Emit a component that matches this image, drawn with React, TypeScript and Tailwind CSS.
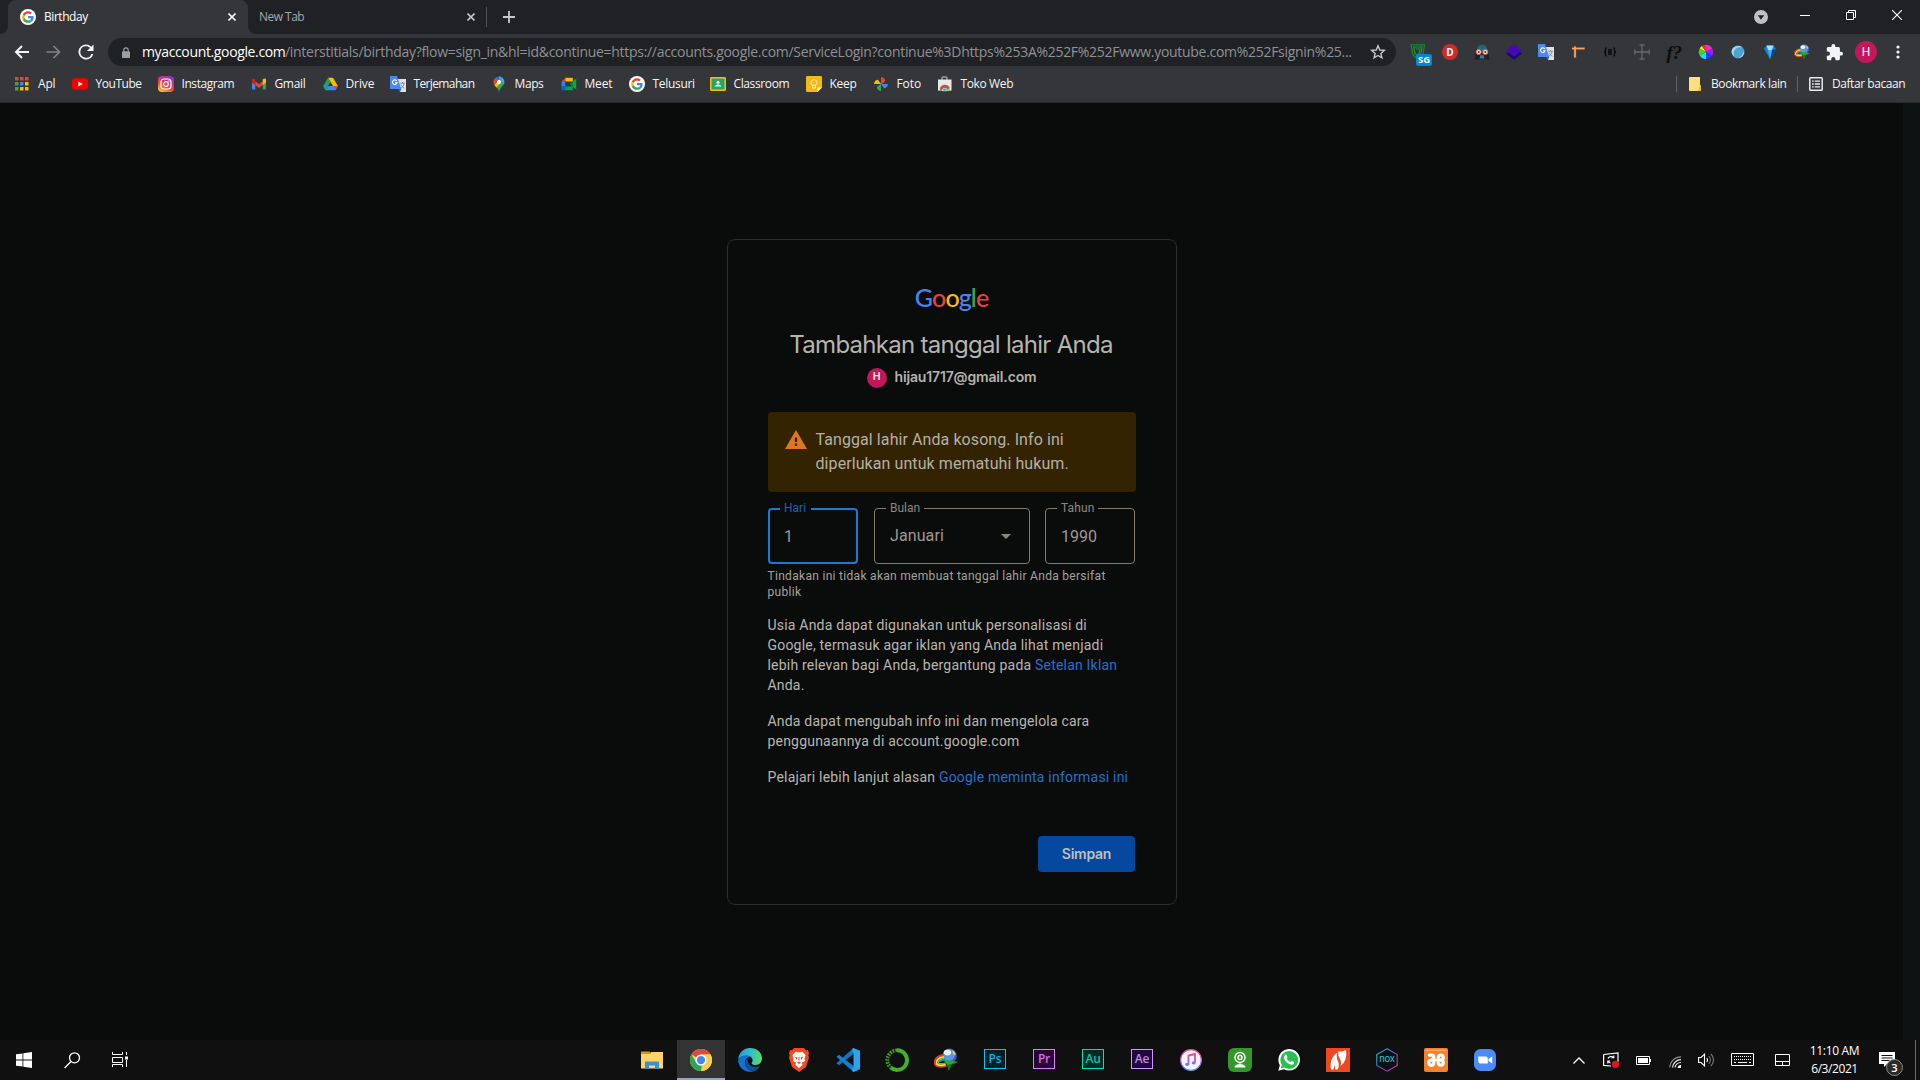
import React from "react";

type IconProps = { w: number; h?: number; vb?: string; className?: string; children: React.ReactNode };

function Svg({ w, h = w, vb, className = "", children }: IconProps) {
  return (
    <svg width={w} height={h} viewBox={vb ?? `0 0 ${w} ${h}`} fill="none" className={`block shrink-0 ${className}`}>
      {children}
    </svg>
  );
}

/* ---------- shared brand icons ---------- */

function GoogleG() {
  return (
    <Svg w={16} vb="0 0 32 32">
      <circle cx="16" cy="16" r="16" fill="#fff" />
      <g transform="translate(4.300 4.300) scale(.488)">
        <path fill="#EA4335" d="M24 9.5c3.54 0 6.71 1.22 9.21 3.6l6.85-6.85C35.9 2.38 30.47 0 24 0 14.62 0 6.51 5.38 2.56 13.22l7.98 6.19C12.43 13.72 17.74 9.5 24 9.5z" />
        <path fill="#4285F4" d="M46.98 24.55c0-1.57-.15-3.09-.38-4.55H24v9.02h12.94c-.58 2.96-2.26 5.48-4.78 7.18l7.73 6c4.51-4.18 7.09-10.36 7.09-17.65z" />
        <path fill="#FBBC05" d="M10.53 28.59c-.48-1.45-.76-2.99-.76-4.59s.27-3.14.76-4.59l-7.98-6.19C.92 16.46 0 20.12 0 24c0 3.88.92 7.54 2.56 10.78l7.97-6.19z" />
        <path fill="#34A853" d="M24 48c6.48 0 11.93-2.13 15.89-5.81l-7.73-6c-2.15 1.45-4.92 2.3-8.16 2.3-6.26 0-11.57-4.22-13.47-9.91l-7.98 6.19C6.51 42.62 14.62 48 24 48z" />
      </g>
    </Svg>
  );
}

function TranslateIcon() {
  return (
    <Svg w={16}>
      <path d="M7 3h9v12.6a.4.4 0 0 1-.4.4H10z" fill="#dfe3e8" />
      <path d="M10.2 7.2h4.6M12.5 6v1.2M11 12.2c1.6-1 2.7-2.600 3-5M11 8.600c.6 1.600 1.800 2.800 3.500 3.600" stroke="#7d858e" strokeWidth=".9" />
      <path d="M.6 0H7l4.300 13H.6a.6.6 0 0 1-.6-.6V.6A.6.6 0 0 1 .6 0z" fill="#4a8af4" />
      <path d="M8 13h3.300L10 16z" fill="#2f5fc4" />
      <path d="M6.800 4.900A2.300 2.300 0 1 0 7.100 6.700H5.100" stroke="#fff" strokeWidth="1.100" />
    </Svg>
  );
}

function IdmIcon({ size }: { size: number }) {
  return (
    <Svg w={size} vb="0 0 24 24">
      <circle cx="15.500" cy="7.800" r="7.300" fill="#2f63b8" />
      <circle cx="14.800" cy="7" r="6" fill="#5f94de" />
      <ellipse cx="13.500" cy="4.600" rx="3.600" ry="2.800" fill="#e9f3ff" />
      <path d="M18.500 2.300c1.700.8 2.800 2.300 3.200 4.200-.9 1.200-2 .8-2.400-.4s-1.300-2.600-.8-3.800z" fill="#e2cc62" />
      <path d="M9.500 7.200C3 7.500-.5 12.500.9 16.200c1.500 3 6.100 3.200 11.600 2" stroke="#e5392a" strokeWidth="1.800" />
      <path d="M9.700 8.900C4.600 9.300 1.600 13 2.600 15.500c1.100 2 5 2 9.200 1.100" stroke="#ffe03a" strokeWidth="2" />
      <path d="M10 10.700c-4 .4-6.200 2.900-5.500 4.300.8 1.100 3.800 1 6.700.2" stroke="#4fc858" strokeWidth="1.700" />
      <path d="M10 12.200c-2.500.3-4 1.400-3.600 2.100" stroke="#4a6fe0" strokeWidth="1.200" />
      <path d="M9.300 11.800L24 13.700l-6.500 2.700-2.700 6.300-1.500-5.400z" fill="#1db521" />
      <path d="M13.300 17.100L24 13.700l-6.500 2.700-2.700 6.300z" fill="#0c7a12" />
    </Svg>
  );
}

/* ---------- tab strip ---------- */

function CloseX({ color }: { color: string }) {
  return (
    <Svg w={8}>
      <path d="M.5.5l7 7M7.500.5l-7 7" stroke={color} strokeWidth="1.600" />
    </Svg>
  );
}

function TabStrip() {
  return (
    <div className="flex h-[34px] shrink-0 bg-[#202124]">
      <div className="flex w-2 items-end bg-[#35363a]">
        <div className="h-full w-full rounded-br-lg bg-[#202124]" />
      </div>
      <div className="flex h-full w-[240px] items-center rounded-t-lg bg-[#35363a] pr-3 pl-3">
        <GoogleG />
        <span className="ml-2 flex-1 text-[12px] tracking-[-0.45px] text-white">Birthday</span>
        <CloseX color="#f1f3f4" />
      </div>
      <div className="flex w-2 items-end bg-[#35363a]">
        <div className="h-full w-full rounded-bl-lg bg-[#202124]" />
      </div>
      <div className="flex w-[231px] items-center pl-[3px]">
        <span className="flex-1 text-[12px] tracking-[-0.52px] text-[#a5a8ad]">New Tab</span>
        <div className="mr-[11px]">
          <CloseX color="#c0c3c7" />
        </div>
        <div className="h-5 w-px bg-[#505256]" />
      </div>
      <div className="ml-4 flex items-center">
        <Svg w={12}>
          <path d="M6 0v12M0 6h12" stroke="#c6c9cd" strokeWidth="1.800" />
        </Svg>
      </div>
      <div className="flex-1" />
      <div className="flex items-center pr-[32px]">
        <Svg w={14}>
          <circle cx="7" cy="7" r="7" fill="#bdc0c5" />
          <path d="M3.800 5.200h6.400L7 9.800z" fill="#202124" />
        </Svg>
      </div>
      <div className="flex h-[29px] items-center gap-9 pr-[18px]">
        <Svg w={10}>
          <path d="M0 5.500h10" stroke="#fff" />
        </Svg>
        <Svg w={10}>
          <path d="M.5 2.500h7v7h-7zM2.500 2.500v-2h7v7h-2" stroke="#fff" />
        </Svg>
        <Svg w={10}>
          <path d="M0 0l10 10M10 0L0 10" stroke="#fff" strokeWidth="1.100" />
        </Svg>
      </div>
    </div>
  );
}

/* ---------- toolbar ---------- */

function Extensions() {
  return (
    <div className="flex h-[28px] items-center">
      {[
        <div key="sg" className="relative">
          <Svg w={16}>
            <path d="M1 .8h13.500L13 10.500 8 15.500 3 11z" stroke="#128a2d" strokeWidth="1.300" />
            <path d="M3.500 3h8.500l-1 6.500L8 12.500 5 9.500z" stroke="#109a2b" strokeWidth="1.200" />
            <path d="M6 5h4l-.6 4L8 10.500" stroke="#109a2b" strokeWidth="1.200" />
          </Svg>
          <div className="absolute top-[10px] left-[6px] flex h-3 w-4 items-center justify-center rounded-[2px] bg-[#0288d1] text-[9.500px] font-bold text-white">
            SG
          </div>
        </div>,
        <div key="d" className="flex size-4 items-center justify-center rounded-full bg-[#cf2a2a] text-[10px] font-bold text-white">
          D
        </div>,
        <Svg key="inc" w={16}>
          <path d="M3 7C3 2.500 5 .8 8.300.8S13.500 3 13.500 7z" fill="#2c6473" />
          <path d="M2 7h12l1.500 8.500H.5z" fill="#15252f" />
          <circle cx="4.700" cy="8" r="2.600" fill="#f6d5cb" stroke="#d9563b" strokeWidth=".7" />
          <circle cx="11.300" cy="8" r="2.600" fill="#f6d5cb" stroke="#d9563b" strokeWidth=".7" />
          <circle cx="4.700" cy="8" r="1" fill="#6b2b22" />
          <circle cx="11.300" cy="8" r="1" fill="#6b2b22" />
          <path d="M6.500 11h3l1 3.500h-5z" fill="#4f7583" />
        </Svg>,
        <Svg key="layers" w={16}>
          <path d="M0 9.500L8 4l8 5.500-8 6.500z" fill="#1f0872" />
          <path d="M0 6.500L8 .5l8 6-8 6z" fill="#4709b4" />
        </Svg>,
        <TranslateIcon key="tr" />,
        <Svg key="ruler" w={14}>
          <path d="M1 3.500h13M4 1v12" stroke="#7b4a22" strokeWidth="2.800" />
          <path d="M1 3.500h12.500M4 1.500v11" stroke="#f2a763" strokeWidth="1.700" />
        </Svg>,
        <Svg key="json" w={14} h={10}>
          <path d="M3.500 1C2 1 2.500 2 2.500 3.500S2 5 1 5c1 0 1.500 0 1.500 1.500S2 9 3.500 9M10.500 1c1.500 0 1 1 1 2.500S12 5 13 5c-1 0-1.500 0-1.500 1.500s.5 2.500-1 2.500M5 3h4M5 5h4M5 7h4" stroke="#08090a" strokeWidth="1.300" />
        </Svg>,
        <Svg key="cross" w={16}>
          <path d="M8 1v14M1 8h14M5.500.8h5M5.500 15.200h5M.8 5.500v5M15.200 5.500v5" stroke="#66686c" strokeWidth="1.300" />
        </Svg>,
        <span key="f" className="font-['Liberation_Serif'] text-[19px] leading-none font-bold tracking-[-0.5px] text-[#0c0c0d] italic">
          f?
        </span>,
        <Svg key="wheel" w={16}>
          <path d="M8 8L8 .8A7.200 7.200 0 0 1 14.200 4.400z" fill="#ff28c8" />
          <path d="M8 8l6.200-3.600a7.200 7.200 0 0 1 0 7.200z" fill="#a01cff" />
          <path d="M8 8l6.200 3.600A7.200 7.200 0 0 1 8 15.200z" fill="#1f3cff" />
          <path d="M8 8v7.200a7.200 7.200 0 0 1-6.200-3.600z" fill="#1fe0e8" />
          <path d="M8 8l-6.200 3.600a7.200 7.200 0 0 1 0-7.200z" fill="#27e22d" />
          <path d="M8 8L1.800 4.400A4 4 0 0 1 4 2z" fill="#e8f020" />
          <path d="M8 8L4 2A7.200 7.200 0 0 1 8 .8z" fill="#ff2a20" />
        </Svg>,
        <Svg key="sphere" w={14}>
          <circle cx="7" cy="7" r="6.500" fill="#4ea3d3" />
          <path d="M1 4.500C3 .5 9 0 11.500 2.300 9 2 6 2 4 4.500s-1 4-1 6.500C1 10 0 7 1 4.500z" fill="#a9d6ee" />
          <path d="M8 12.800c3-.5 5.300-3 5-6.500-.6 2.500-2.500 5-5 6.500z" fill="#d5e8f3" />
        </Svg>,
        <Svg key="gem" w={12} h={14}>
          <path d="M2.500.5h7L12 4 6 14 0 4z" fill="#1480d8" />
          <path d="M2.500.5h7L8 5H4z" fill="#9fe0ff" />
          <path d="M8 5l4-1-6 10z" fill="#0a3f93" />
          <path d="M4 5h4l-2 9z" fill="#38b6f4" />
        </Svg>,
        <IdmIcon key="idm" size={16} />,
        <Svg key="puzzle" w={17} vb="1 1 22 22">
          <path d="M20.500 11H19V7c0-1.100-.9-2-2-2h-4V3.500a2.500 2.500 0 0 0-5 0V5H4c-1.100 0-2 .9-2 2v3.800h1.500a2.700 2.700 0 0 1 0 5.400H2V20c0 1.100.9 2 2 2h3.800v-1.500a2.700 2.700 0 0 1 5.400 0V22H17c1.100 0 2-.9 2-2v-4h1.500a2.500 2.500 0 0 0 0-5z" fill="#f1f3f4" />
        </Svg>,
        <div key="av" className="flex size-[22px] items-center justify-center rounded-full bg-[#c2185b] font-['Roboto'] text-[12px] text-white">
          H
        </div>,
        <Svg key="dots" w={4} h={14}>
          <circle cx="2" cy="2" r="1.600" fill="#f1f3f4" />
          <circle cx="2" cy="7" r="1.600" fill="#f1f3f4" />
          <circle cx="2" cy="12" r="1.600" fill="#f1f3f4" />
        </Svg>,
      ].map((icon, i) => (
        <div key={i} className="flex w-8 shrink-0 items-center justify-center">
          {icon}
        </div>
      ))}
    </div>
  );
}

function Toolbar() {
  return (
    <div className="flex h-[36px] shrink-0 items-center bg-[#35363a]">
      <div className="flex w-[108px] shrink-0 items-center pl-[14px]">
        <Svg w={15} h={14}>
          <path d="M15 7H1.800M8 1L2 7l6 6" stroke="#f1f3f4" strokeWidth="2" />
        </Svg>
        <Svg w={15} h={14} className="ml-[17px]">
          <path d="M.5 7h13M7.500 1l6 6-6 6" stroke="#828387" strokeWidth="1.700" />
        </Svg>
        <Svg w={16} className="ml-[17px]" vb="3.500 3.500 17 17">
          <path d="M17.650 6.350A7.960 7.960 0 0 0 12 4a8 8 0 1 0 7.730 10h-2.080A6 6 0 1 1 12 6c1.660 0 3.140.69 4.220 1.780L13 11h7V4z" fill="#f1f3f4" />
        </Svg>
      </div>
      <div className="flex h-7 w-[1288px] shrink-0 items-center rounded-full bg-[#202124] pr-[10px] pl-[14px]">
        <Svg w={8} h={11}>
          <path d="M1.800 4.500V3a2.200 2.200 0 0 1 4.400 0v1.500" stroke="#9aa0a6" strokeWidth="1.200" />
          <rect y="4.200" width="8" height="6.800" rx=".8" fill="#9aa0a6" />
        </Svg>
        <div className="ml-3 flex flex-1 text-[14px] leading-5 whitespace-nowrap">
          <span className="w-[143px] tracking-[-0.36px] text-white">myaccount.google.com</span>
          <span className="tracking-[-0.293px] text-[#8e9196]">
            /interstitials/birthday?flow=sign_in&amp;hl=id&amp;continue=https://accounts.google.com/ServiceLogin?continue%3Dhttps%253A%252F%252Fwww.youtube.com%252Fsignin%25...
          </span>
        </div>
        <Svg w={16}>
          <path d="M8 1.800l1.800 4.200 4.500.4-3.400 3 1 4.400L8 11.500l-3.900 2.300 1-4.400-3.400-3 4.500-.4z" stroke="#c6c9cd" strokeWidth="1.400" />
        </Svg>
      </div>
      <div className="ml-[6px]">
        <Extensions />
      </div>
    </div>
  );
}

/* ---------- bookmarks bar ---------- */

const appsColors = ["#ea4335", "#ea4335", "#ea4335", "#34a853", "#4285f4", "#fbbc04", "#34a853", "#fbbc04", "#fbbc04"];

const bookmarks: { label: string; box: string; text: string; icon: React.ReactNode }[] = [
  {
    label: "Apl",
    box: "w-[57px]",
    text: "tracking-[-0.2px]",
    icon: (
      <Svg w={14}>
        {appsColors.map((c, i) => (
          <rect key={i} x={(i % 3) * 5} y={Math.floor(i / 3) * 5} width="3.500" height="3.500" fill={c} />
        ))}
      </Svg>
    ),
  },
  {
    label: "YouTube",
    box: "w-[86px]",
    text: "tracking-[-0.47px]",
    icon: (
      <Svg w={16} h={12}>
        <rect y=".2" width="16" height="11.600" rx="2.800" fill="#f60000" />
        <path d="M6.300 3.500l4.600 2.500-4.600 2.500z" fill="#fff" />
      </Svg>
    ),
  },
  {
    label: "Instagram",
    box: "w-[93px]",
    text: "tracking-[-0.42px]",
    icon: (
      <Svg w={16}>
        <defs>
          <linearGradient id="insta" x1=".2" y1="1" x2=".8" y2="0">
            <stop offset="0" stopColor="#fdc13c" />
            <stop offset=".35" stopColor="#f2572f" />
            <stop offset=".65" stopColor="#cf2f86" />
            <stop offset="1" stopColor="#7a3bc9" />
          </linearGradient>
        </defs>
        <rect width="16" height="16" rx="4" fill="url(#insta)" />
        <rect x="3" y="3" width="10" height="10" rx="3" stroke="#fff" strokeWidth="1.200" />
        <circle cx="8" cy="8" r="2.300" stroke="#fff" strokeWidth="1.200" />
        <circle cx="11" cy="5" r=".7" fill="#fff" />
      </Svg>
    ),
  },
  {
    label: "Gmail",
    box: "w-[71px]",
    text: "tracking-[-0.35px]",
    icon: (
      <Svg w={14} h={12} className="ml-px">
        <path d="M0 2v8.500c0 .5.500 1 1 1h2.300V4z" fill="#4285f4" />
        <path d="M14 2v8.500c0 .5-.5 1-1 1h-2.300V4z" fill="#34a853" />
        <path d="M3.300 3.300L7 6.200l3.700-2.900v3.800L7 10 3.300 7.100z" fill="#ea4335" />
        <path d="M0 2C0 .4 1.500.1 2.700 1l.6.500v5.600L0 4.700z" fill="#c5221f" />
        <path d="M14 2c0-1.600-1.500-1.900-2.700-1l-.6.500v5.600L14 4.700z" fill="#fbbc04" />
      </Svg>
    ),
  },
  {
    label: "Drive",
    box: "w-[68px]",
    text: "tracking-[-0.1px]",
    icon: (
      <Svg w={15} h={14} className="ml-[0.500px]">
        <path d="M5 .800h5l4.900 8.300H10z" fill="#fbbc04" />
        <path d="M5 .800L0 9.200l2.400 4L7.500 5z" fill="#1ea362" />
        <path d="M4.800 9.100h10.100l-2.400 4.100H2.400z" fill="#4285f4" />
        <path d="M11 9.100h3.900l-1.700 2.900z" fill="#ea4335" />
      </Svg>
    ),
  },
  { label: "Terjemahan", box: "w-[101px]", text: "tracking-[-0.63px]", icon: <TranslateIcon /> },
  {
    label: "Maps",
    box: "w-[70px]",
    text: "tracking-[-0.4px]",
    icon: (
      <Svg w={12} h={16} className="ml-[2px]">
        <path d="M6 .5a5.400 5.400 0 0 0-4.200 2L6 6z" fill="#1a73e8" />
        <path d="M1.800 2.500A5.300 5.300 0 0 0 1.500 9l4.400-5.500z" fill="#ea4335" />
        <path d="M6 .5c3 0 5.400 2.500 5.400 5.400 0 1-.2 2-.7 2.700L6 4.500z" fill="#4aa0f6" />
        <path d="M1.500 9l5.700-6.500L10.700 8.600C9.500 10.600 6.700 12.500 6 15.700 5.200 12.500 2.800 11 1.500 9z" fill="#34a853" />
        <path d="M1.500 9l3-3.400L7 7.500 3.300 11.400z" fill="#fbbc04" />
        <circle cx="6" cy="5.900" r="2" fill="#fff" />
      </Svg>
    ),
  },
  {
    label: "Meet",
    box: "w-[68px]",
    text: "tracking-[-0.2px]",
    icon: (
      <Svg w={16} h={14}>
        <path d="M.5 4.500L4.500.8v3.700z" fill="#ea4335" />
        <path d="M4.500.8h7.300v3.700H4.500z" fill="#fbbc04" />
        <path d="M.5 4.500h3.800v5H.5z" fill="#2684fc" />
        <path d="M.5 9.500h3.800v3.700H1.500a1 1 0 0 1-1-1z" fill="#0066da" />
        <path d="M4.300 9.500h7.500v3.700H4.300zM9 7l2.800-2.800 3.400-2.700v11L11.800 10z" fill="#00ac47" />
        <path d="M9 7l2.800-3v6z" fill="#00832d" />
      </Svg>
    ),
  },
  { label: "Telusuri", box: "w-[81px]", text: "tracking-[-0.3px]", icon: <GoogleG /> },
  {
    label: "Classroom",
    box: "w-[96px]",
    text: "tracking-[-0.38px]",
    icon: (
      <Svg w={16} h={14}>
        <rect width="16" height="14" rx="1.200" fill="#f5ba15" />
        <rect x="1.600" y="1.600" width="12.800" height="10.800" fill="#25a667" />
        <circle cx="8" cy="5.200" r="1.500" fill="#fff" />
        <path d="M4.800 9.600C4.800 8 6.500 7.400 8 7.400s3.200.6 3.200 2.200z" fill="#fff" />
      </Svg>
    ),
  },
  {
    label: "Keep",
    box: "w-[67px]",
    text: "tracking-[-0.3px]",
    icon: (
      <Svg w={16}>
        <path d="M1 0h14a1 1 0 0 1 1 1v10.500L11.500 16H1a1 1 0 0 1-1-1V1a1 1 0 0 1 1-1z" fill="#f5b912" />
        <path d="M16 11.500L11.500 16v-4.500z" fill="#fff1b8" />
        <circle cx="8" cy="6.500" r="3" stroke="#fff3cf" strokeWidth="1" />
        <path d="M6.500 9v3h3V9" stroke="#fff3cf" strokeWidth="1" />
      </Svg>
    ),
  },
  {
    label: "Foto",
    box: "w-[64px]",
    text: "tracking-[-0.1px]",
    icon: (
      <Svg w={16}>
        <path d="M8 8V1c3 .3 4.200 2.300 4.200 4L9 8z" fill="#ea4335" />
        <path d="M8 8h7c-.3 3-2.300 4.200-4 4.200z" fill="#4285f4" />
        <path d="M8 8v7c-3-.3-4.200-2.300-4.200-4z" fill="#34a853" />
        <path d="M8 8H1c.3-3 2.300-4.200 4-4.200z" fill="#fbbc04" />
      </Svg>
    ),
  },
  {
    label: "Toko Web",
    box: "w-[82px]",
    text: "tracking-[-0.38px]",
    icon: (
      <Svg w={16}>
        <path d="M5 4V1.800c0-.5.4-.8.800-.8h3.400c.5 0 .8.300.8.800V4" stroke="#9ba0a5" strokeWidth="1.400" />
        <path d="M1 3.500h13.500V14a.8.800 0 0 1-.8.800H1.800A.8.800 0 0 1 1 14z" fill="#e8eaed" />
        <path d="M2.500 14.800A5.300 5.300 0 0 1 13 14.800z" fill="#34a853" />
        <path d="M2.700 13A5.300 5.300 0 0 1 12.800 12L8 12z" fill="#ea4335" />
        <path d="M12.800 12.500l.3 2.300H9z" fill="#fbbc04" />
        <path d="M5.300 14.800a2.500 2.500 0 0 1 5 0z" fill="#4285f4" stroke="#fff" strokeWidth=".6" />
      </Svg>
    ),
  },
];

function BookmarksBar() {
  return (
    <div className="flex h-8 shrink-0 items-center bg-[#35363a] pb-[4px] pl-[15px] text-[12px] whitespace-nowrap text-[#f4f5f6]">
      {bookmarks.map((b) => (
        <div key={b.label} className={`flex shrink-0 items-center ${b.box}`}>
          <div className={`flex shrink-0 items-center ${b.label === "Apl" ? "w-[23px]" : "w-[23.500px]"}`}>{b.icon}</div>
          <span className={b.text}>{b.label}</span>
        </div>
      ))}
      <div className="flex-1" />
      <div className="flex items-center pr-[14px]">
        <div className="h-4 w-px bg-[#606266]" />
        <Svg w={12} h={14} className="ml-3">
          <path d="M0 1a1 1 0 0 1 1-1h10v8.500h1V14H1a1 1 0 0 1-1-1z" fill="#fddf7b" />
          <path d="M11 8.500h1V14H9z" fill="#e5b93f" />
        </Svg>
        <span className="ml-[10px] w-[76px] tracking-[-0.4px]">Bookmark lain</span>
        <div className="ml-[10px] h-4 w-px bg-[#606266]" />
        <Svg w={14} className="ml-[11px]">
          <rect x=".8" y=".8" width="12.400" height="12.400" rx=".8" stroke="#e8eaed" strokeWidth="1.500" />
          <path d="M3 4.200h1.700M5.700 4.200H11M3 7h1.700M5.700 7H11M3 9.800h1.700M5.700 9.800H11" stroke="#e8eaed" strokeWidth="1.300" />
        </Svg>
        <span className="ml-[9px] w-[74px] tracking-[-0.43px]">Daftar bacaan</span>
      </div>
    </div>
  );
}

/* ---------- birthday card ---------- */

function Card() {
  return (
    <div className="mt-[136px] flex h-[666px] w-[450px] flex-col rounded-lg border border-[#2b2e2f] bg-[#0a0c0b] px-10 font-['Roboto']">
      <div className="mt-[41px] flex h-8 items-center justify-center pr-px font-['Lato'] text-[25px] leading-8 font-medium tracking-[-0.9px]">
        <span className="text-[#4285f4]">G</span>
        <span className="text-[#ea4335]">o</span>
        <span className="text-[#fbbc05]">o</span>
        <span className="text-[#4285f4]">g</span>
        <span className="text-[#34a853]">l</span>
        <span className="text-[#ea4335]">e</span>
      </div>
      <h1 className="mt-4 -mr-2 -ml-[10px] text-center font-['Inter'] text-[24px] leading-8 tracking-[-0.72px] whitespace-nowrap text-[#b8b4ad]">
        Tambahkan tanggal lahir Anda
      </h1>
      <div className="mt-[6px] flex h-5 items-center justify-center pr-px">
        <div className="mt-px flex size-5 items-center justify-center rounded-full bg-[#c2185b] text-[11px] font-medium text-[#ece6e7]">H</div>
        <span className="-mt-px ml-2 font-['Inter'] text-[14px] font-semibold tracking-[-0.16px] text-[#b5b1aa]">hijau1717@gmail.com</span>
      </div>
      <div className="mt-[25px] flex h-20 w-[368px] rounded bg-[#332300] pt-4 pl-4">
        <Svg w={22} h={19} className="mt-[2px] ml-[0.500px]">
          <path d="M11 0l11 19H0z" fill="#dd771d" />
          <path d="M11 7.500v4.500M11 13.500v2.500" stroke="#332300" strokeWidth="2.200" />
        </Svg>
        <p className="ml-[9px] text-[16px] leading-6 tracking-[0.08px] text-[#b5b0a6]">
          Tanggal lahir Anda kosong. Info ini
          <br />
          diperlukan untuk mematuhi hukum.
        </p>
      </div>
      <div className="mt-4 flex h-14 text-[16px] text-[#9d9991]">
        <div className="relative flex w-[90px] items-center rounded border-2 border-[#1d79d0] pt-[2px] pl-[14px]">
          1
          <span className="absolute -top-[10px] left-[10px] bg-[#0a0c0b] pr-[5px] pl-1 text-[12px] leading-4 text-[#1c63ac]">Hari</span>
        </div>
        <div className="relative ml-4 flex w-[156px] items-center justify-between rounded border border-[#827b6f] pr-[18px] pl-[15px] tracking-[0.1px]">
          <span className="-mt-px">Januari</span>
          <Svg w={10} h={5} className="mt-px">
            <path d="M0 0h10L5 5z" fill="#8c877e" />
          </Svg>
          <span className="absolute -top-[9px] left-[11px] bg-[#0a0c0b] px-1 text-[12px] leading-4 tracking-normal text-[#8d887f]">Bulan</span>
        </div>
        <div className="relative ml-[15px] flex w-[90px] items-center rounded border border-[#827b6f] pt-[2px] pl-[15px]">
          1990
          <span className="absolute -top-[9px] left-[11px] bg-[#0a0c0b] px-1 text-[12px] leading-4 tracking-[0.1px] text-[#8d887f]">Tahun</span>
        </div>
      </div>
      <p className="mt-1 -ml-[0.500px] text-[12px] leading-4 tracking-[0.3px] text-[#a5a199]">
        Tindakan ini tidak akan membuat tanggal lahir Anda bersifat
        <br />
        publik
      </p>
      <div className="mt-[15px] -ml-[0.500px] flex flex-col gap-4 text-[14px] leading-5 tracking-[0.2px] whitespace-nowrap text-[#b9b5ae]">
        <p>
          Usia Anda dapat digunakan untuk personalisasi di
          <br />
          Google, termasuk agar iklan yang Anda lihat menjadi
          <br />
          lebih relevan bagi Anda, bergantung pada <span className="text-[#2570cc]">Setelan Iklan</span>
          <br />
          Anda.
        </p>
        <p>
          Anda dapat mengubah info ini dan mengelola cara
          <br />
          penggunaannya di account.google.com
        </p>
        <p>
          Pelajari lebih lanjut alasan <span className="text-[#2570cc]">Google meminta informasi ini</span>
        </p>
      </div>
      <button className="mt-[49px] mr-px flex h-9 w-[97px] items-center justify-center self-end rounded bg-[#05489f] pb-px font-['Inter'] text-[14px] font-semibold tracking-[-0.25px] text-[#c0bfbb]">
        Simpan
      </button>
    </div>
  );
}

/* ---------- taskbar ---------- */

function AdobeIcon({ label, box }: { label: string; box: string }) {
  return (
    <div className={`mb-[2px] flex h-5 w-[22px] items-center justify-center border text-[12px] leading-none font-semibold tracking-[-0.2px] ${box}`}>
      {label}
    </div>
  );
}

const apps: { name: string; icon: React.ReactNode }[] = [
  {
    name: "explorer",
    icon: (
      <Svg w={22} h={18}>
        <path d="M0 .5h8.500l1.500 2H0z" fill="#e0a010" />
        <path d="M0 2.500h9L10.500 1H22v16.500H0z" fill="#fdd465" />
        <path d="M0 2.500h9.500V1.500H0z" fill="#d99808" />
        <path d="M4 18v-7.500h14V18h-4v-3.500H8V18z" fill="#3b8fd2" />
      </Svg>
    ),
  },
  {
    name: "chrome",
    icon: (
      <Svg w={22} vb="0 0 48 48">
        <circle cx="24" cy="24" r="24" fill="#f8cf4a" />
        <path d="M24 0a24 24 0 0 1 20.800 12H24a12 12 0 0 0-10.400 6L3.200 12A24 24 0 0 1 24 0z" fill="#d84b40" />
        <path d="M44.800 12A24 24 0 0 1 24 48l10.400-18a12 12 0 0 0 0-12L31 12z" fill="#f8cf4a" />
        <path d="M3.200 12l10.400 18a12 12 0 0 0 12 5.900L24 48A24 24 0 0 1 3.200 12z" fill="#2fa35a" />
        <circle cx="24" cy="24" r="12" fill="#fff" />
        <circle cx="24" cy="24" r="9" fill="#4286f2" />
      </Svg>
    ),
  },
  {
    name: "edge",
    icon: (
      <Svg w={24}>
        <defs>
          <linearGradient id="edgeTop" x1="0" y1=".3" x2="1" y2=".4">
            <stop offset="0" stopColor="#2498d6" />
            <stop offset=".5" stopColor="#2fbfd0" />
            <stop offset="1" stopColor="#59db62" />
          </linearGradient>
        </defs>
        <path d="M.2 11C.8 4.500 6 0 12 0c7 0 12 4.800 12 10.300 0 4-2.800 6.700-6.200 6.700-2.300 0-4.200-.8-4.200-1.800 0-.7 1-1.200 1-3 0-2.500-2.600-4.500-6-4.500C4.500 7.700 1.500 9.500.2 11z" fill="url(#edgeTop)" />
        <path d="M.1 12.500C.7 9.500 4.300 7.400 8 7.400c1.700 0 3.200.5 4.200 1.200C9 9 7 11.800 7.200 15c.2 4.500 4.300 8 8.500 8.300A12 12 0 0 1 .1 12.500z" fill="#1272cf" />
        <path d="M9.800 10C7.500 11.500 6.700 14.500 8 17.700c1.500 3.500 5 5.700 7.700 5.600 2.600-.8 5-2.600 6.600-5.300-5 2.300-10.300.4-12-3-.8-1.700-.9-3.600-.5-5z" fill="#124f9c" />
      </Svg>
    ),
  },
  {
    name: "brave",
    icon: (
      <Svg w={20} h={24}>
        <path d="M5 0h10l2 2.300L19 2l1 3.500-.7 2L20 9.500 17 19l-7 5-7-5L0 9.500l.7-2L0 5.500 1 2l2 .3z" fill="#f4481e" />
        <path d="M10 4.500l3.500-.7L16.500 7l-1 4 .5 2-3 1.500.5 2.500L10 20l-3.500-3 .5-2.500L4 13l.5-2-1-4 3-3.200z" fill="#fff" />
        <path d="M5.500 8.500l3 1-.8 2.500zM14.500 8.500l-3 1 .8 2.500zM8 14.500l2-1 2 1-2 1.500zM9.500 9h1v3.500h-1z" fill="#f4481e" />
      </Svg>
    ),
  },
  {
    name: "vscode",
    icon: (
      <Svg w={24}>
        <path d="M17.500 0v6L3 17.200l-2.600-2z" fill="#1077bd" />
        <path d="M.4 8.800L3 6.700 17.500 18v6L.4 8.800z" fill="#1481cc" />
        <path d="M17.500 0L24 2.800v18.400L17.500 24l-1.500-1 1.500-5V6L16 1z" fill="#2aa3f0" />
      </Svg>
    ),
  },
  {
    name: "anaconda",
    icon: (
      <Svg w={24}>
        <path d="M12 2.300A9.800 9.800 0 1 1 5.500 19.300" stroke="#43b02a" strokeWidth="4" />
        <path d="M12 2.300A9.800 9.800 0 0 0 5.500 19.300" stroke="#43b02a" strokeWidth="3.600" strokeDasharray="1.700 1.100" />
        <path d="M11.500 3.300A9 9 0 0 0 6 19.500" stroke="#101010" strokeWidth=".6" strokeDasharray="2 1" />
      </Svg>
    ),
  },
  { name: "idm", icon: <IdmIcon size={24} /> },
  { name: "photoshop", icon: <AdobeIcon label="Ps" box="border-[#00c8ff] bg-[#061e26] text-[#00b4e6]" /> },
  { name: "premiere", icon: <AdobeIcon label="Pr" box="border-[#e67aff] bg-[#2a0634] text-[#d26eea]" /> },
  { name: "audition", icon: <AdobeIcon label="Au" box="border-[#00e4bb] bg-[#072a23] text-[#00c8a3]" /> },
  { name: "aftereffects", icon: <AdobeIcon label="Ae" box="border-[#cf96fd] bg-[#1f0740] text-[#bd86ea]" /> },
  {
    name: "itunes",
    icon: (
      <Svg w={22}>
        <defs>
          <linearGradient id="itunes" x1="0" y1="0" x2="0" y2="1">
            <stop offset="0" stopColor="#f2497d" />
            <stop offset=".6" stopColor="#a45ce6" />
            <stop offset="1" stopColor="#3f9df0" />
          </linearGradient>
        </defs>
        <circle cx="11" cy="11" r="10.400" fill="#f4f2f8" stroke="url(#itunes)" strokeWidth="1.200" />
        <path d="M8.500 15V6.500L15 5v8.500" stroke="url(#itunes)" strokeWidth="1.800" />
        <ellipse cx="7.200" cy="15.300" rx="2" ry="1.600" fill="#6e7bee" />
        <ellipse cx="13.700" cy="13.800" rx="2" ry="1.600" fill="#8b6bea" />
      </Svg>
    ),
  },
  {
    name: "webcam",
    icon: (
      <Svg w={24}>
        <path d="M6 0h18v18a6 6 0 0 1-6 6H6a6 6 0 0 1-6-6V6a6 6 0 0 1 6-6z" fill="#35962a" />
        <circle cx="12" cy="9.500" r="5" stroke="#fff" strokeWidth="1.500" />
        <circle cx="12" cy="9.500" r="2" stroke="#fff" strokeWidth="1.500" />
        <path d="M12 14.500v2.500M7 19c0-1.600 2-2.200 5-2.200s5 .6 5 2.200z" stroke="#fff" fill="#fff" />
      </Svg>
    ),
  },
  {
    name: "whatsapp",
    icon: (
      <Svg w={22}>
        <path d="M.3 21.800l1.500-5.600A10.800 10.800 0 1 1 6 20.300z" fill="#fff" />
        <path d="M2.800 19.300l1-3.500A8.900 8.900 0 1 1 6.400 18.400z" fill="#28c04e" />
        <path d="M7.300 5.800c.5-.4 1.200-.3 1.400.2l.8 1.800c.1.400-.7 1-.9 1.500.9 1.800 2.200 3 4 3.800.5-.2 1-1.200 1.400-1.100l2 .9c.4.3.2 1.500-.3 2-1.200 1.200-3.200 1-5.500-.3-2-1.200-3.700-3.300-4.100-5-.3-1.400.3-3 1.200-3.800z" fill="#fff" />
      </Svg>
    ),
  },
  {
    name: "nitro",
    icon: (
      <Svg w={24}>
        <path d="M0 0h24v24H0z" fill="#f0481e" />
        <path d="M5 21.500C3.800 15 5.500 8.500 11.500 4.500 10.200 8 10.800 11 12.300 14c1 2.500.6 5-.8 7.500H9c.4-1.800.2-3-.5-4L7.500 21.500z" fill="#fff" />
        <path d="M12.500 3.500h3.500L20 2c1 6.500-.5 12.500-5.500 16 1-3.500.3-5.500-1-8-1.300-2.300-1.500-4.200-1-6.500z" fill="#fff" />
      </Svg>
    ),
  },
  {
    name: "nox",
    icon: (
      <div className="relative">
        <Svg w={22} h={24}>
          <defs>
            <linearGradient id="nox" x1="0" y1="0" x2="1" y2="1">
              <stop offset="0" stopColor="#18d9cf" />
              <stop offset=".45" stopColor="#356fe0" />
              <stop offset=".75" stopColor="#c02bc0" />
              <stop offset="1" stopColor="#ff4a8c" />
            </linearGradient>
          </defs>
          <path d="M11 .8l10.200 5.700v11L11 23.200.8 17.500v-11z" stroke="url(#nox)" strokeWidth="1.100" />
        </Svg>
        <span className="absolute inset-x-0 top-[4px] text-center font-['Inter'] text-[9.500px] leading-[14px] tracking-[-0.3px] text-[#16cdd0]">nox</span>
      </div>
    ),
  },
  {
    name: "xampp",
    icon: (
      <Svg w={24}>
        <rect width="24" height="24" rx="2" fill="#f5822a" />
        <path d="M1.500 2.200h21" stroke="#f9b884" strokeWidth="1" />
        <g stroke="#fff" strokeWidth="3.200" strokeLinecap="round" strokeLinejoin="round">
          <path d="M5.300 7.200h2.500q2 0 2 2.200T7.300 12q-2.500.300-2.500 2.800t2.400 2.500q2.300 0 2.600-2.500" />
          <path d="M14.200 9.500q.200-2.500 2.500-2.500t2.500 2.300-2.400 2.700q2.400.300 2.400 2.700t-2.500 2.500-2.500-2.500" />
          <path d="M7.500 12h9" />
        </g>
      </Svg>
    ),
  },
  {
    name: "zoom",
    icon: (
      <Svg w={22}>
        <rect width="22" height="22" rx="6.500" fill="#4a8df8" />
        <path d="M4.300 7.500h7.500a2 2 0 0 1 2 2v5H6.300a2 2 0 0 1-2-2zM14.500 10l3.700-2.500v7L14.500 12z" fill="#fff" />
      </Svg>
    ),
  },
];

function Taskbar() {
  return (
    <div className="flex h-10 shrink-0 items-stretch bg-[#101010]">
      <div className="flex w-[628px] items-center pl-4">
        <Svg w={16}>
          <path d="M0 2.300L6.500 1.400v6.100H0zM7.300 1.300L16 0v7.500H7.300zM0 8.400h6.500v6.200L0 13.700zM7.300 8.400H16V16l-8.700-1.300z" fill="#fff" />
        </Svg>
        <Svg w={17} className="ml-8">
          <circle cx="10.500" cy="5.800" r="5" stroke="#fff" strokeWidth="1.300" />
          <path d="M7 9.500L.6 16" stroke="#fff" strokeWidth="1.300" />
        </Svg>
        <Svg w={16} h={15} className="mt-[-1px] ml-[31px]">
          <path d="M.5 0v2.500h10V0M.5 5.500h10v5H.5zM.5 15v-2.500h10V15M14.500 0v3M14.500 8v7" stroke="#fff" />
          <path d="M13 4.500h3v3h-3z" fill="#fff" />
        </Svg>
      </div>
      <div className="flex gap-px">
        {apps.map((a) => (
          <div
            key={a.name}
            className={`flex w-12 items-center justify-center ${a.name === "chrome" ? "border-b-2 border-[#9aa5bd] bg-[#333333] pt-[2px]" : ""}`}
          >
            {a.icon}
          </div>
        ))}
      </div>
      <div className="flex-1" />
      <div className="flex items-center text-white">
        <Svg w={12} h={7}>
          <path d="M.5 6.500L6 1l5.500 5.500" stroke="#fff" strokeWidth="1.300" />
        </Svg>
        <Svg w={17} h={16} className="ml-[18px]">
          <path d="M.6 2.500L15 .8v9M8 14L.6 13.400V2.500" stroke="#fff" strokeWidth="1.200" />
          <path d="M5 6.500a3.500 3.500 0 0 1 5.500-1M10.800 3.500v2.200H8.500M5 9a3.500 3.500 0 0 0 2.500 2M4.800 11.500V9H7" stroke="#fff" strokeWidth="1.100" />
          <circle cx="12.500" cy="12.300" r="3.600" fill="#e81123" />
        </Svg>
        <Svg w={15} h={9} className="ml-4">
          <path d="M.5.5h13v8H.5z" stroke="#fff" />
          <path d="M2 2h10v5H2zM14 3h1v3h-1z" fill="#fff" />
        </Svg>
        <Svg w={12} className="mt-[3px] ml-[18px]">
          <path d="M.8 11.500A11 11 0 0 1 12 .8" stroke="#8b8b8b" strokeWidth="1.200" />
          <path d="M3.500 11.500A8.500 8.500 0 0 1 12 3.700M6 11.500a6 6 0 0 1 6-5" stroke="#e8e8e8" strokeWidth="1.200" />
          <path d="M8.500 12A3.600 3.600 0 0 1 12 9v3z" fill="#fff" />
        </Svg>
        <Svg w={17} h={14} className="ml-[17px]">
          <path d="M.6 4.500h2.500L6.500 1.200v11.600L3.100 9.500H.6z" stroke="#fff" strokeWidth="1.100" />
          <path d="M8.700 5a3 3 0 0 1 0 4" stroke="#fff" strokeWidth="1.100" />
          <path d="M10.800 3a6 6 0 0 1 0 8M13 1a8.500 8.500 0 0 1 0 12" stroke="#7b7b7b" strokeWidth="1.100" />
        </Svg>
        <Svg w={23} h={13} className="-mt-px ml-4">
          <path d="M.5.5h22v12H.5z" stroke="#fff" />
          <path d="M3 3.500h17M3 6.500h17" stroke="#fff" strokeDasharray="1 1" />
          <path d="M3 9.500h2M7 9.500h9M18 9.500h2" stroke="#fff" />
        </Svg>
        <Svg w={15} h={12} className="ml-[21px]">
          <path d="M.5.5h14v11H.5zM.5 7.500h14M7.500 7.500v4" stroke="#fff" />
        </Svg>
        <div className="ml-[12px] w-[65px] text-center text-[12px] leading-[18px]">
          <div className="tracking-[-0.34px]">11:10 AM</div>
          <div className="tracking-[-0.42px]">6/3/2021</div>
        </div>
        <div className="relative ml-[12px]">
          <Svg w={16} h={16}>
            <path d="M0 0h16v12H8l-3 3v-3H0z" fill="#fff" />
            <path d="M2.500 3.500h11M2.500 6h11M2.500 8.500h8" stroke="#101010" strokeWidth="1" />
          </Svg>
          <div className="absolute top-[7px] left-[7px] flex size-[17px] items-center justify-center rounded-full border border-[#8a8a8a] bg-[#2b2b2b] text-[11px] leading-none font-semibold">
            3
          </div>
        </div>
        <div className="ml-5 h-10 w-px bg-[#6d6d6d]" />
        <div className="w-1" />
      </div>
    </div>
  );
}

export default function App() {
  return (
    <div className="flex h-[1080px] w-[1920px] flex-col overflow-hidden bg-[#0a0c0b] font-['Open_Sans',sans-serif]">
      <TabStrip />
      <Toolbar />
      <BookmarksBar />
      <div className="h-px shrink-0 bg-[#2a2c2c]" />
      <div className="flex min-h-0 flex-1">
        <div className="flex flex-1 justify-center pl-px">
          <Card />
        </div>
        <div className="w-[17px] bg-[#0f1213]" />
      </div>
      <Taskbar />
    </div>
  );
}
